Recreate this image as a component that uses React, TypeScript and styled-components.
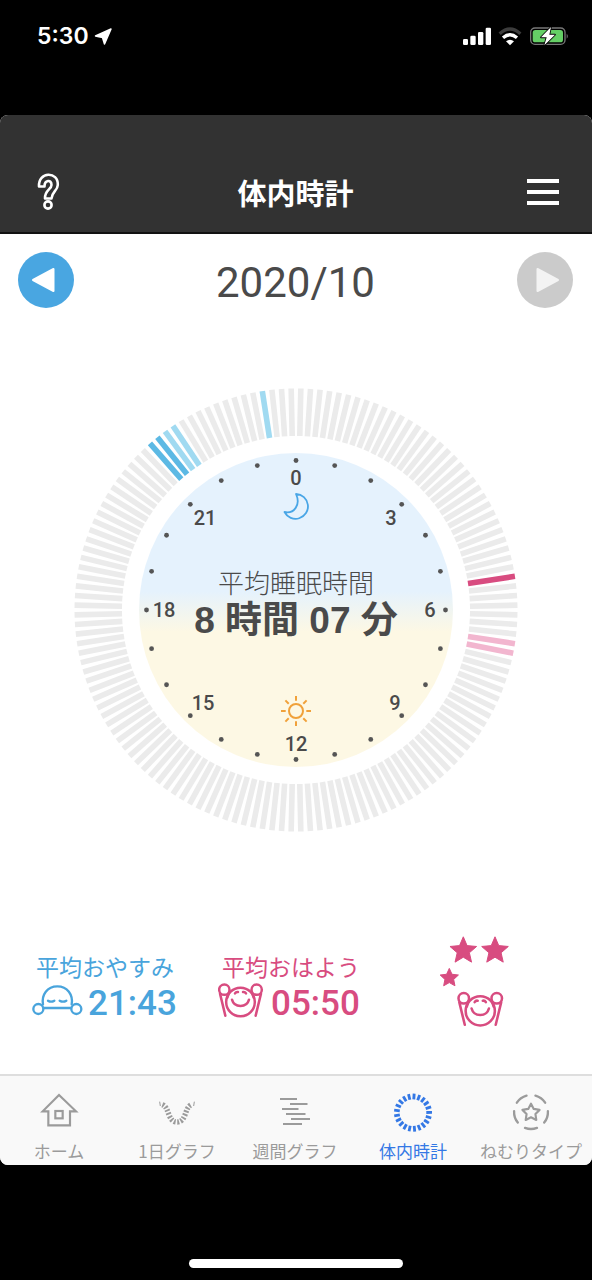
import React from "react";
import styled, { createGlobalStyle } from "styled-components";

const GlobalStyle = createGlobalStyle`
  * { box-sizing: border-box; }
  body { margin: 0; background: #000; }
`;

const cjk = `"Noto Sans CJK JP", sans-serif`;
const blue = "#49a4dc";
const pink = "#d84c80";
const ink = "#4a4a4a";

const Page = styled.div`
  min-height: 100vh;
  display: flex;
  flex-direction: column;
  background: #000;
  font-family: ${cjk};
`;

const StatusBar = styled.div`
  height: 115px;
  padding: 22px 22px 0 37px;
  display: flex;
  justify-content: space-between;
  align-items: flex-start;
`;

const Clock = styled.div`
  display: flex;
  align-items: center;
  gap: 5px;
  height: 29px;
  color: #fff;
  font: 600 23px/29px Inter, sans-serif;
`;

const AppFrame = styled.div`
  flex: 1;
  display: flex;
  flex-direction: column;
  overflow: hidden;
  border-radius: 8px;
  background: #fff;
`;

const Header = styled.header`
  height: 119px;
  padding: 36px 30px 0 29px;
  display: flex;
  align-items: center;
  justify-content: space-between;
  background: #323232;
  border-bottom: 2px solid #111;
`;

const Title = styled.h1`
  margin: 0;
  color: #fff;
  font-size: 29px;
  line-height: 40px;
  font-weight: 700;
`;

const IconButton = styled.button`
  width: 38px;
  height: 40px;
  padding: 0;
  border: 0;
  background: none;
  display: flex;
  align-items: center;
  justify-content: center;
`;

const MonthNav = styled.div`
  padding: 18px 19px 0 18px;
  display: flex;
  align-items: center;
  justify-content: space-between;
`;

const RoundButton = styled.button<{ $color: string }>`
  width: 56px;
  height: 56px;
  padding: 0;
  border: 0;
  border-radius: 50%;
  background: ${(p) => p.$color};
`;

const Month = styled.h2`
  margin: 0;
  padding-top: 6px;
  color: ${ink};
  font: 400 42px/50px Roboto, sans-serif;
`;

const Main = styled.main`
  flex: 1;
  display: flex;
  flex-direction: column;
`;

const Dial = styled.section`
  width: 75%;
  margin: 80px auto 0;
  display: grid;
  place-items: center;
  > * { grid-area: 1 / 1; }
`;

const DialChart = styled.svg`
  display: block;
  width: 100%;
  height: auto;
`;

const DialSummary = styled.div`
  padding-bottom: 14px;
  text-align: center;
  color: ${ink};
`;

const SummaryLabel = styled.div`
  font-size: 26px;
  line-height: 36px;
  font-weight: 300;
`;

const SummaryValue = styled.div`
  font: 700 37px/42px "Liberation Sans", ${cjk};
`;

const Stats = styled.section`
  margin-top: auto;
  padding: 100px 0 46px 32px;
  display: grid;
  grid-template-columns: 186fr 218fr 156fr;
  align-items: end;
`;

const Stat = styled.div<{ $color: string }>`
  color: ${(p) => p.$color};
`;

const StatLabel = styled.div`
  padding-left: 4px;
  font-size: 23px;
  line-height: 28px;
`;

const StatValue = styled.div`
  display: flex;
  align-items: center;
  gap: 5px;
  height: 48px;
  font: 500 35px/48px Roboto, sans-serif;
  > svg { margin-bottom: 6px; }
`;

const TabBar = styled.nav`
  display: grid;
  grid-template-columns: repeat(5, 1fr);
  height: 91px;
  padding: 15px 2px 0 0;
  background: #f9f9f9;
  border-top: 2px solid #dedede;
`;

const Tab = styled.a<{ $active?: boolean }>`
  display: flex;
  flex-direction: column;
  align-items: center;
  gap: 6px;
  color: ${(p) => (p.$active ? "#3478e5" : "#9b9b9b")};
  font-size: 17px;
  line-height: 24px;
  white-space: nowrap;
  text-decoration: none;
`;

const HomeArea = styled.div`
  height: 115px;
  padding-bottom: 12px;
  display: flex;
  align-items: flex-end;
  justify-content: center;
`;

const HomeIndicator = styled.div`
  width: 36%;
  height: 9px;
  border-radius: 5px;
  background: #fff;
`;

const point = (deg: number, r: number) => {
  const a = (deg * Math.PI) / 180;
  return { x: r * Math.sin(a), y: -r * Math.cos(a) };
};

const starPoints = (cx: number, cy: number, outer: number, inner: number) =>
  Array.from({ length: 10 }, (_, i) => {
    const p = point(i * 36, i % 2 ? inner : outer);
    return `${(cx + p.x).toFixed(2)},${(cy + p.y).toFixed(2)}`;
  }).join(" ");

// Each segment of the ring is ten minutes of the day.
const segmentColors: Record<number, string> = {
  32: pink,
  39: "#f2b6cf",
  40: "#f2b6cf",
  127: "#5cb9e4",
  128: "#5cb9e4",
  129: "#a0daf1",
  130: "#a0daf1",
  140: "#a0daf1",
};

const hourLabels = [
  { text: "0", x: 0, y: -125 },
  { text: "3", x: 95, y: -85 },
  { text: "6", x: 134, y: 7 },
  { text: "9", x: 99, y: 100 },
  { text: "12", x: 0, y: 141 },
  { text: "15", x: -93, y: 100 },
  { text: "18", x: -132, y: 7 },
  { text: "21", x: -91, y: -85 },
];

function SleepDial() {
  return (
    <DialChart viewBox="-222 -222 444 444" role="img" aria-label="体内時計">
      <defs>
        <linearGradient id="daynight" x1="0" y1="0" x2="0" y2="1">
          <stop offset="0.44" stopColor="#e5f2fd" />
          <stop offset="0.57" stopColor="#fdf8e4" />
        </linearGradient>
      </defs>
      {Array.from({ length: 144 }, (_, i) => (
        <rect
          key={i}
          x={-2.8}
          y={-221.5}
          width={5.6}
          height={47.5}
          fill={segmentColors[i] ?? "#ebebeb"}
          transform={`rotate(${(i + 0.5) * 2.5})`}
        />
      ))}
      <circle r={157} fill="url(#daynight)" />
      {Array.from({ length: 24 }, (_, i) => {
        const p = point(i * 15, 149.5);
        return <circle key={i} cx={p.x} cy={p.y} r={2.4} fill="#555" />;
      })}
      {hourLabels.map((h) => (
        <text
          key={h.text}
          x={h.x}
          y={h.y}
          textAnchor="middle"
          fill={ink}
          fontFamily="Roboto, sans-serif"
          fontSize={20}
          fontWeight={500}
        >
          {h.text}
        </text>
      ))}
      <path
        d="M0 -116A12.4 12.4 0 1 1 -11.5 -98C-2 -96 5 -105 0 -116Z"
        fill="none"
        stroke="#49a6e6"
        strokeWidth={1.8}
        strokeLinejoin="round"
      />
      <g fill="none" stroke="#f0a13a" strokeWidth={2}>
        <circle cy={101} r={7} />
        {Array.from({ length: 8 }, (_, i) => (
          <path key={i} d="M0 -10.3V-15" transform={`translate(0 101) rotate(${i * 45})`} />
        ))}
      </g>
    </DialChart>
  );
}

function SleepingFace() {
  return (
    <svg width="51" height="34" viewBox="36 193 153 102" fill="none" stroke="currentColor" strokeWidth="7" strokeLinecap="round">
      <path d="M72 265H153" />
      <path d="M69 254C64 225 82 200 112 200S160 225 155 254" />
      <circle cx="55" cy="268" r="15" />
      <circle cx="169" cy="268" r="15" />
      <path d="M84 243Q93 249 103 243M119 243Q129 249 139 243" />
    </svg>
  );
}

function HappyFaceShape() {
  return (
    <g fill="none" stroke="currentColor" strokeWidth="7.500" strokeLinecap="round">
      <circle cx="19" cy="20" r="15.500" />
      <circle cx="116" cy="20" r="15.500" />
      <circle cx="67.500" cy="57" r="43" />
      <path d="M6 32L22 98M129 32L113 98M34 27L28 44M101 27L107 44" />
      <path d="M42 50Q47 69 67.500 69Q88 69 93 50" />
      <path d="M51 31Q54 26 60 27M75 27Q81 26 84 31" />
    </g>
  );
}

function HappyFace() {
  return (
    <svg width="48" height="36" viewBox="0 0 144 108">
      <HappyFaceShape />
    </svg>
  );
}

function StarRating() {
  return (
    <svg width="76" height="94" viewBox="436 934 76 94" color={pink} role="img" aria-label="星3つ">
      <g fill={pink} stroke={pink} strokeLinejoin="round">
        <polygon points={starPoints(463.3, 950.8, 14, 6.4)} />
        <polygon points={starPoints(495, 950.8, 14, 6.4)} />
        <polygon points={starPoints(449.3, 978, 9.6, 4.6)} />
      </g>
      <g transform="translate(457.300 991.500) scale(0.340)">
        <HappyFaceShape />
      </g>
    </svg>
  );
}

function HomeIcon() {
  return (
    <svg width="42" height="42" viewBox="112 92 126 126" fill="none" stroke="currentColor" strokeWidth="6.500">
      <path d="M143 153H126L175 104L226 153H208V195H143Z" />
      <rect x="164" y="152" width="22" height="22" />
    </svg>
  );
}

function DayGraphIcon() {
  return (
    <svg width="42" height="42" viewBox="467 92 126 126" fill="none" stroke="currentColor">
      <path
        d="M486 133C499 138 501 152 507 166C513 180 520 185 530 185S547 180 553 166C559 152 561 138 574 133"
        strokeWidth="16"
        strokeDasharray="5.800 4.600"
      />
      <path d="M478 124L480 137M582 124L580 137" strokeWidth="3" />
    </svg>
  );
}

function WeekGraphIcon() {
  return (
    <svg width="42" height="42" viewBox="275 1091 42 42" stroke="currentColor" strokeWidth="2">
      <path d="M281 1099H298M291 1104H308.500M283 1109H299.500M287 1114H306.500M292 1119H311M284 1124H303" />
    </svg>
  );
}

function BodyClockIcon() {
  return (
    <svg width="42" height="42" viewBox="-63 -63 126 126" stroke="currentColor" strokeWidth="8.500">
      {Array.from({ length: 21 }, (_, i) => (
        <path key={i} d="M0 -40V-57" transform={`translate(0 2) rotate(${((i + 0.2) * 360) / 21})`} />
      ))}
    </svg>
  );
}

function SleepTypeIcon() {
  return (
    <svg width="42" height="42" viewBox="-63 -63 126 126" fill="none" stroke="currentColor" strokeWidth="7" strokeLinecap="round" strokeLinejoin="round">
      {Array.from({ length: 5 }, (_, i) => (
        <path key={i} d="M-18 47.500A51 51 0 0 0 18 47.500" transform={`rotate(${i * 72})`} />
      ))}
      <polygon points={starPoints(0, 2, 27, 14)} strokeWidth="6.500" />
    </svg>
  );
}

const tabs = [
  { label: "ホーム", icon: <HomeIcon /> },
  { label: "1日グラフ", icon: <DayGraphIcon /> },
  { label: "週間グラフ", icon: <WeekGraphIcon /> },
  { label: "体内時計", icon: <BodyClockIcon />, active: true },
  { label: "ねむりタイプ", icon: <SleepTypeIcon /> },
];

export default function App() {
  return (
    <Page>
      <GlobalStyle />
      <StatusBar>
        <Clock>
          5:30
          <svg width="18" height="18" viewBox="0 0 18 18" fill="#fff" stroke="#fff" strokeWidth="1.500" strokeLinejoin="round">
            <path d="M17 1L10.500 16L8.500 9.500L1.500 8Z" />
          </svg>
        </Clock>
        <svg width="110" height="28" viewBox="60 21 330 84">
          <g fill="#fff">
            <rect x="69" y="72" width="15" height="18" rx="4" />
            <rect x="91" y="62" width="16" height="28" rx="4" />
            <rect x="114" y="51" width="16" height="39" rx="4" />
            <rect x="137" y="38" width="16" height="52" rx="4" />
            <path d="M210 91L198 79Q210 70 222 79Z" />
          </g>
          <path d="M179 56Q210 28 241 56" fill="none" stroke="#3c3c3c" strokeWidth="10" />
          <path d="M189 68Q210 50 231 68" fill="none" stroke="#fff" strokeWidth="10" />
          <rect x="272" y="39" width="103" height="49" rx="13" fill="none" stroke="#777" strokeWidth="4" />
          <path d="M380 56Q387 63 380 71Z" fill="#777" />
          <rect x="278" y="45" width="91" height="37" rx="8" fill="#65cf66" />
          <path d="M333 36L303 67H320L313 91L345 59H328Z" fill="#fff" stroke="#000" strokeWidth="5" paintOrder="stroke" strokeLinejoin="round" />
        </svg>
      </StatusBar>

      <AppFrame>
        <Header>
          <IconButton aria-label="ヘルプ">
            <svg width="26" height="38" viewBox="35 173 26 38" fill="none">
              <path
                d="M39 186.500C38 171 58.500 171 57.800 185C57.500 191 52 191.500 51.500 198.500H45C44.500 190 51.500 189.500 51.500 185C51.500 179 44.500 180 44.500 186.500Z"
                stroke="#fff"
                strokeWidth="2.600"
                strokeLinejoin="round"
              />
              <circle cx="48" cy="205" r="3.600" stroke="#fff" strokeWidth="2.600" />
            </svg>
          </IconButton>
          <Title>体内時計</Title>
          <IconButton aria-label="メニュー">
            <svg width="32" height="26" viewBox="0 0 32 26" fill="#fff">
              <path d="M0 0H32V4H0ZM0 11H32V15H0ZM0 22H32V26H0Z" />
            </svg>
          </IconButton>
        </Header>

        <Main>
          <MonthNav>
            <RoundButton $color="#49a6e1" aria-label="前の月">
              <svg width="56" height="56" viewBox="0 0 56 56" fill="#fff" stroke="#fff" strokeWidth="2" strokeLinejoin="round">
                <path d="M15 28L35.500 17V39Z" />
              </svg>
            </RoundButton>
            <Month>2020/10</Month>
            <RoundButton $color="#cbcbcb" aria-label="次の月">
              <svg width="56" height="56" viewBox="0 0 56 56" fill="#f3f3f3" stroke="#f3f3f3" strokeWidth="2" strokeLinejoin="round">
                <path d="M41 28L20.500 17V39Z" />
              </svg>
            </RoundButton>
          </MonthNav>

          <Dial>
            <SleepDial />
            <DialSummary>
              <SummaryLabel>平均睡眠時間</SummaryLabel>
              <SummaryValue>8 時間 07 分</SummaryValue>
            </DialSummary>
          </Dial>

          <Stats>
            <Stat $color={blue}>
              <StatLabel>平均おやすみ</StatLabel>
              <StatValue>
                <SleepingFace />
                21:43
              </StatValue>
            </Stat>
            <Stat $color={pink}>
              <StatLabel>平均おはよう</StatLabel>
              <StatValue>
                <HappyFace />
                05:50
              </StatValue>
            </Stat>
            <StarRating />
          </Stats>
        </Main>

        <TabBar>
          {tabs.map((t) => (
            <Tab key={t.label} href="#" $active={t.active}>
              {t.icon}
              {t.label}
            </Tab>
          ))}
        </TabBar>
      </AppFrame>

      <HomeArea>
        <HomeIndicator />
      </HomeArea>
    </Page>
  );
}
